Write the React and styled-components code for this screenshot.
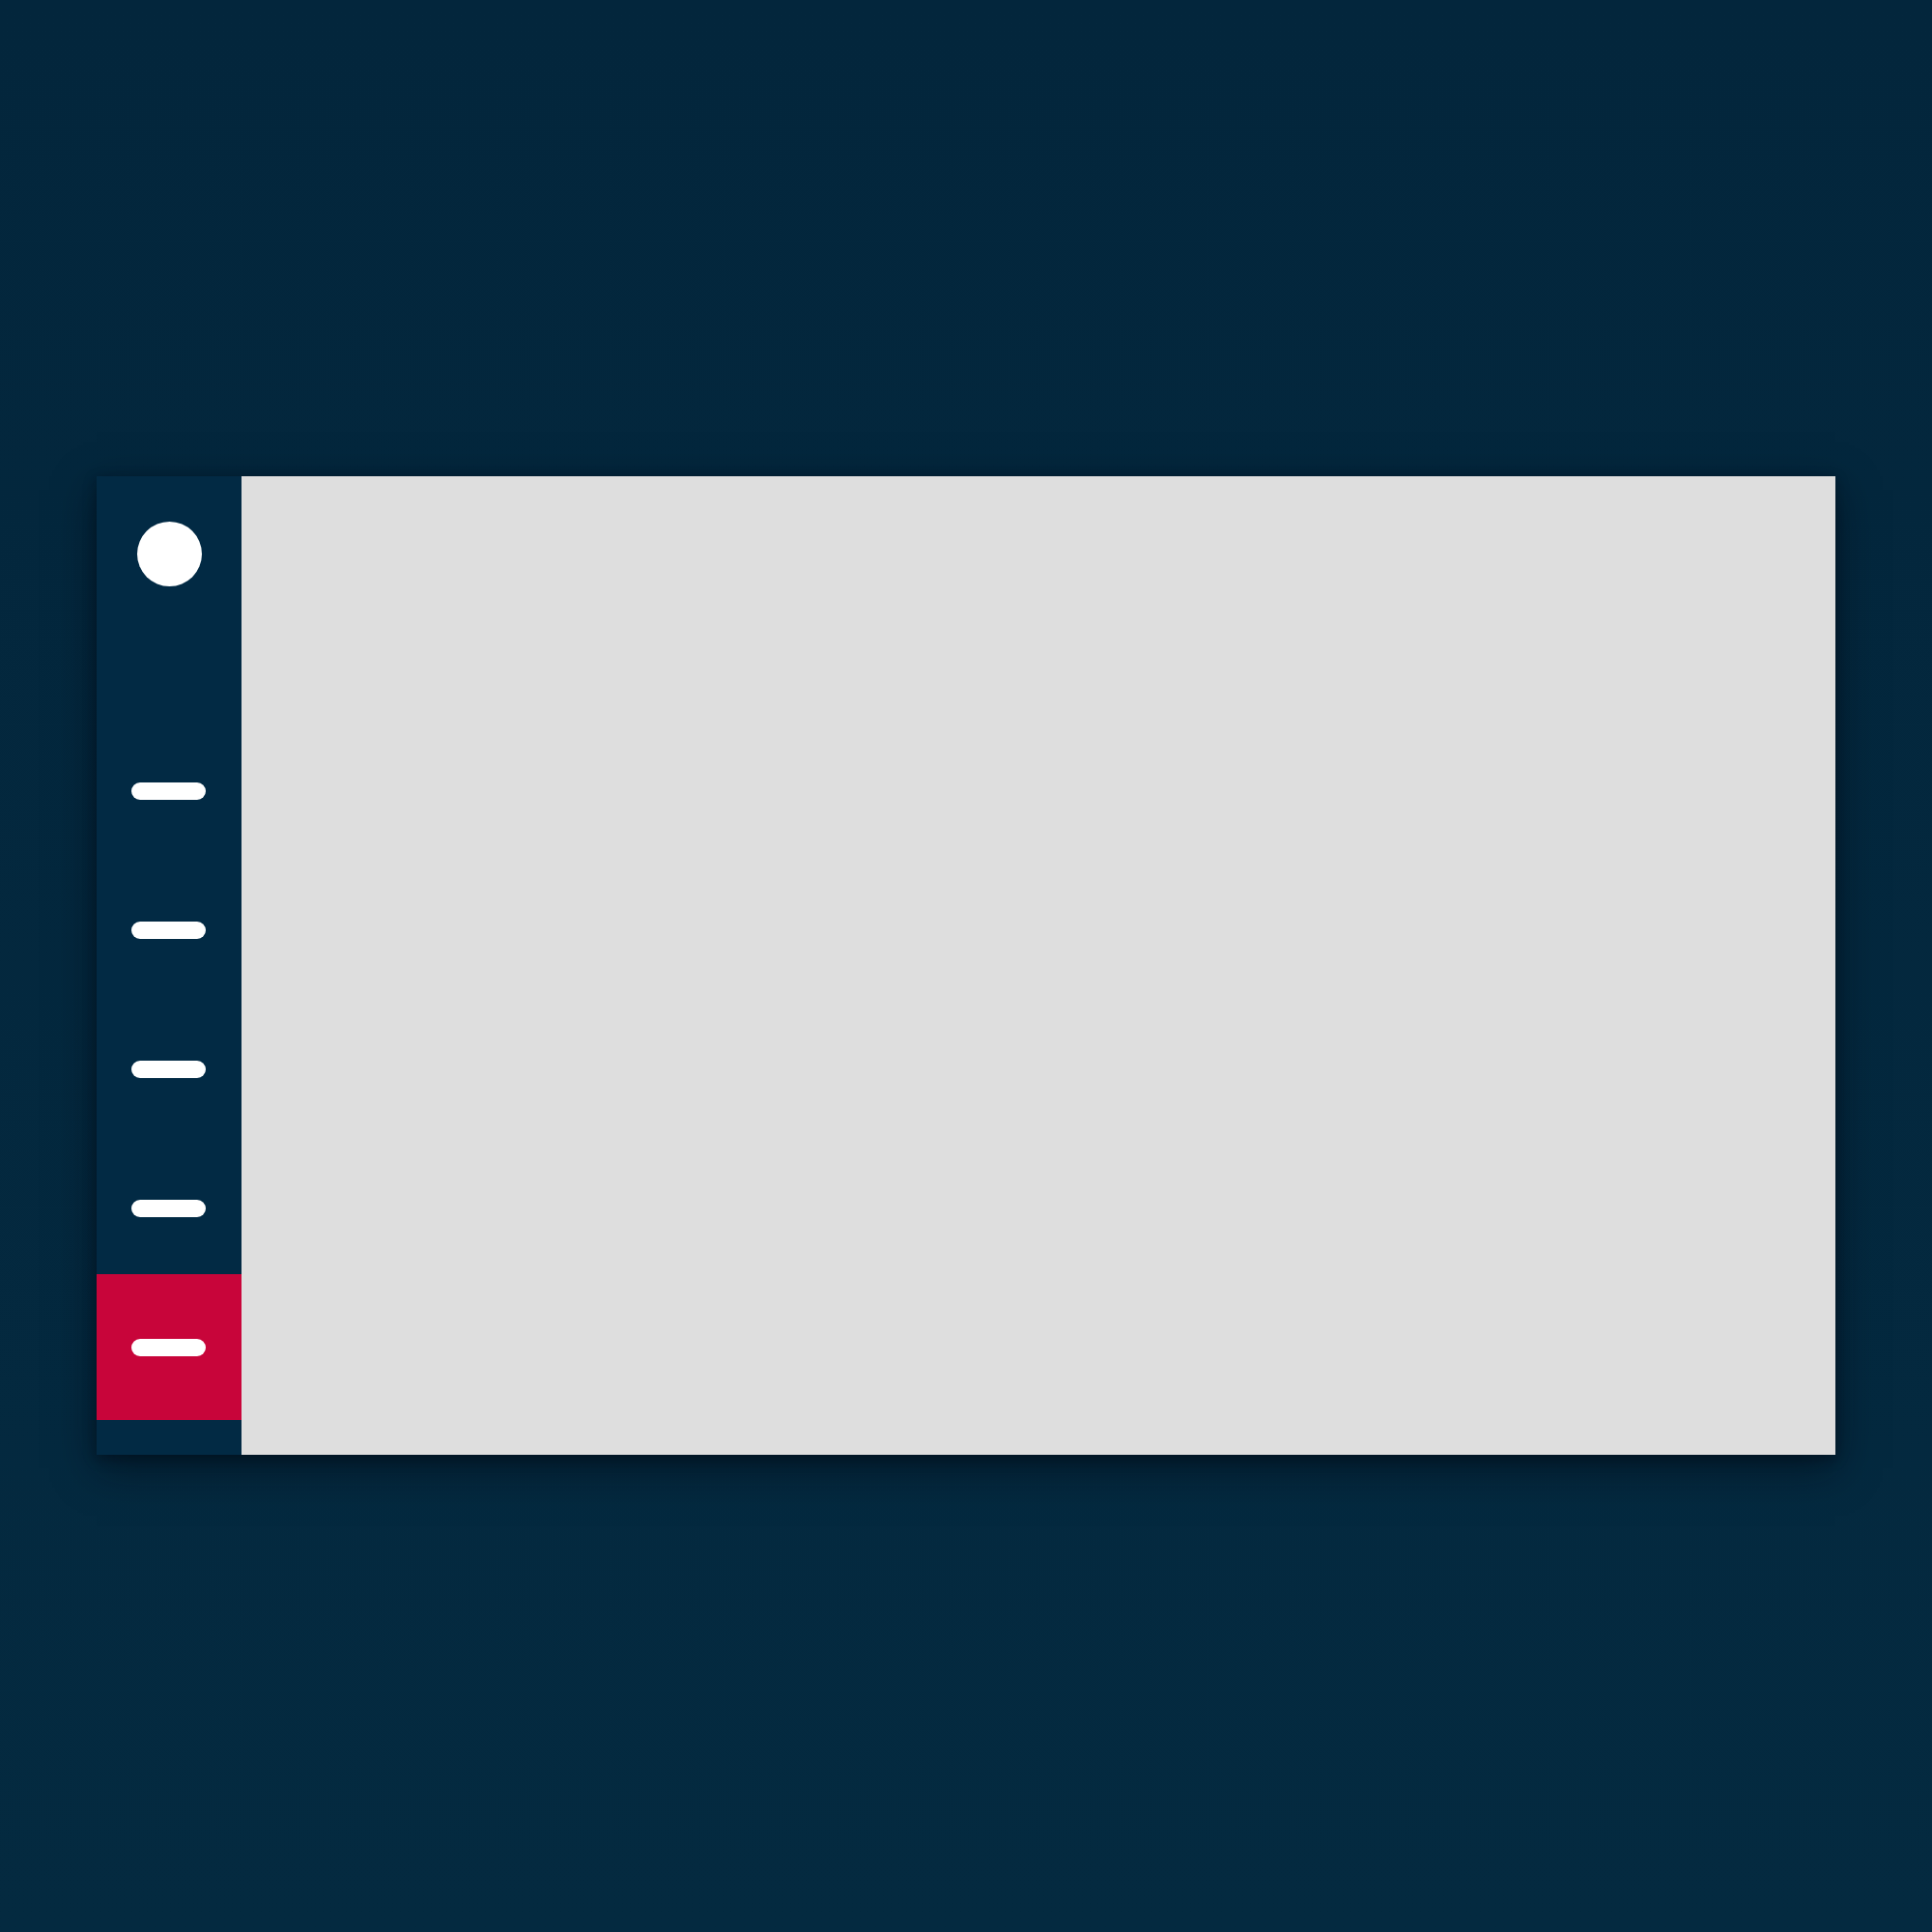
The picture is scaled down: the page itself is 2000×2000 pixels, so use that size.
import styled, { createGlobalStyle } from "styled-components";

const GlobalStyle = createGlobalStyle`
  html, body {
    margin: 0;
    padding: 0;
    background: #042a40;
    font-family: "Liberation Sans", Arial, sans-serif;
  }
`;

const SPage = styled.div`
  width: 2000px;
  height: 2000px;
  box-sizing: border-box;
  padding: 493px 100px 0;
  background: linear-gradient(180deg, #03263c 0%, #042a40 100%);
`;

const SCard = styled.div`
  display: flex;
  height: 1013px;
  box-shadow: 0 14px 40px rgba(0, 10, 20, 0.55), 0 4px 12px rgba(0, 10, 20, 0.4);
`;

const SSidebar = styled.nav`
  width: 150px;
  flex-shrink: 0;
  display: flex;
  flex-direction: column;
  align-items: center;
  background: #022a44;
  padding-top: 47px;
  box-sizing: border-box;
`;

const SLogo = styled.div`
  width: 67px;
  height: 67px;
  border-radius: 50%;
  background: #ffffff;
  margin-bottom: 140px;
`;

const SNavItem = styled.div`
  width: 100%;
  height: ${(props) => (props.active ? "151px" : "144px")};
  margin: ${(props) => (props.active ? "-4px 0 -3px" : "0")};
  padding-right: 2px;
  box-sizing: border-box;
  display: flex;
  justify-content: center;
  align-items: center;
  background: ${(props) => (props.active ? "#c8053a" : "transparent")};
`;

const SBar = styled.span`
  width: 77px;
  height: 18px;
  border-radius: 9px;
  background: #ffffff;
`;

const SMain = styled.main`
  flex: 1;
  background: #dedede;
`;

const items = [1, 2, 3, 4, 5];

const App = () => {
  return (
    <SPage>
      <GlobalStyle />
      <SCard>
        <SSidebar>
          <SLogo />
          {items.map((item) => (
            <SNavItem key={item} active={item === 5}>
              <SBar />
            </SNavItem>
          ))}
        </SSidebar>
        <SMain />
      </SCard>
    </SPage>
  );
};

export default App;
